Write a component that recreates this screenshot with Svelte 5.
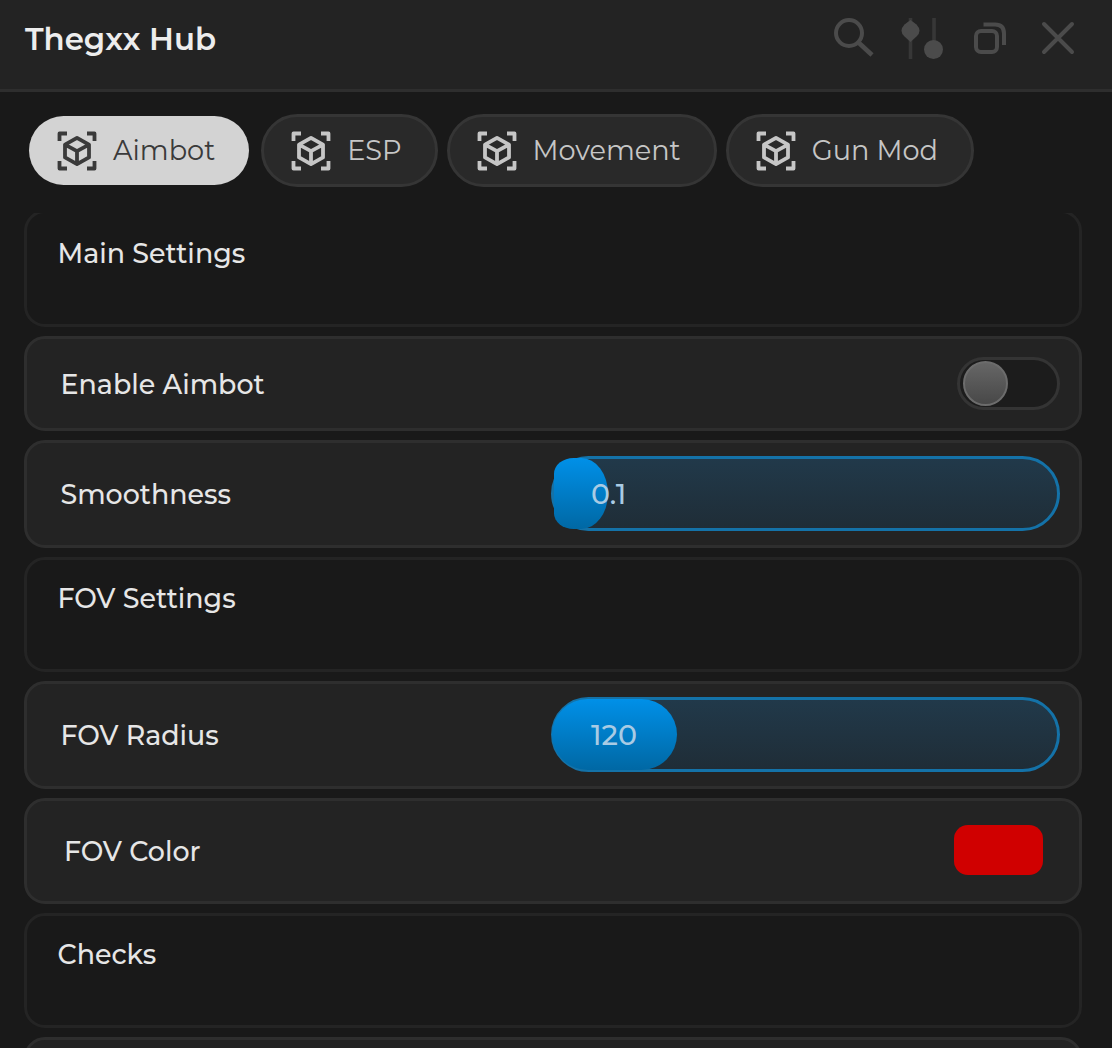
<script lang="ts">
  type Row = {
    kind: "section" | "toggle" | "slider" | "color";
    label: string;
    value?: string;
    fill?: number;
  };

  const tabs = ["Aimbot", "ESP", "Movement", "Gun Mod"];

  const rows: Row[] = [
    { kind: "section", label: "Main Settings" },
    { kind: "toggle", label: "Enable Aimbot" },
    { kind: "slider", label: "Smoothness", value: "0.1", fill: 10.7 },
    { kind: "section", label: "FOV Settings" },
    { kind: "slider", label: "FOV Radius", value: "120", fill: 24.4 },
    { kind: "color", label: "FOV Color" },
    { kind: "section", label: "Checks" },
  ];

  let activeTab = $state("Aimbot");
  let enabled = $state(false);
</script>

<div class="window">
  <header class="topbar">
    <h1>Thegxx Hub</h1>
    <div class="actions">
      <button aria-label="Search">
        <svg width="44" height="44" viewBox="0 0 44 44">
          <circle cx="17" cy="17" r="13" stroke-width="4" />
          <path d="M27 27L40 39" stroke-width="4.6" />
        </svg>
      </button>
      <button aria-label="Settings">
        <svg width="44" height="44" viewBox="0 0 44 44">
          <path d="M10.5 2V43M34 2V36" stroke-width="3.6" opacity="0.5" />
          <path class="solid" d="M10.5 4L16.5 8.5Q22.5 15 16.5 20.5L10.5 26L4.5 20.5Q-1.5 15 4.5 8.5Z" />
          <circle class="solid" cx="33.5" cy="33.5" r="9.5" />
        </svg>
      </button>
      <button aria-label="Minimize">
        <svg width="44" height="44" viewBox="0 0 44 44">
          <rect x="8" y="15" width="21" height="21" rx="5" stroke-width="4" />
          <path d="M15.5 8.5H27Q36 8.5 36 17.5V29" stroke-width="4" />
        </svg>
      </button>
      <button aria-label="Close">
        <svg width="44" height="44" viewBox="0 0 44 44">
          <path d="M8 8L36 36M36 8L8 36" stroke-width="4" stroke-linecap="round" />
        </svg>
      </button>
    </div>
  </header>

  <nav class="tabs">
    {#each tabs as tab}
      <button class="tab" class:active={activeTab === tab} onclick={() => (activeTab = tab)}>
        <svg width="40" height="40" viewBox="0 0 40 40">
          <path d="M2.5 10V2.5H10M30 2.5H37.5V10M37.5 30V37.5H30M10 37.5H2.5V30" />
          <path d="M20 6.8L32 13.6V26.4L20 33.2L8 26.4V13.6ZM8 13.6L20 20.2L32 13.6M20 20.2V33.2" />
        </svg>
        <span>{tab}</span>
      </button>
    {/each}
  </nav>

  <main class="rows">
    {#each rows as row}
      <section class="row {row.kind}">
        <span class="label">{row.label}</span>
        {#if row.kind === "toggle"}
          <button
            class="switch"
            class:on={enabled}
            aria-label={row.label}
            onclick={() => (enabled = !enabled)}
          >
            <span class="knob"></span>
          </button>
        {:else if row.kind === "slider"}
          <div class="track">
            <div class="fill" class:short={(row.fill ?? 0) < 15} style="width: {row.fill}%"></div>
            <span class="value">{row.value}</span>
          </div>
        {:else if row.kind === "color"}
          <button class="swatch" aria-label={row.label}></button>
        {/if}
      </section>
    {/each}
    <section class="row toggle"></section>
  </main>
</div>

<style>
  :global(body) {
    background: #191919;
  }

  .window {
    height: 1048px;
    overflow: hidden;
    display: flex;
    flex-direction: column;
    background: #191919;
    color: #e6e6e6;
    font-family: Montserrat, Inter, sans-serif;
  }

  button {
    padding: 0;
    border: none;
    background: none;
    color: inherit;
    font: inherit;
    cursor: pointer;
  }

  .topbar {
    box-sizing: border-box;
    height: 92px;
    flex: none;
    display: flex;
    justify-content: space-between;
    padding: 0 32px 0 25px;
    background: #232323;
    border-bottom: 3px solid #2e2e2e;
  }

  .topbar h1 {
    margin: 0;
    font-size: 30.8px;
    font-weight: 600;
    line-height: 79px;
    color: #ededed;
  }

  .actions {
    display: flex;
    gap: 24px;
    padding-top: 16px;
  }

  .actions button {
    width: 44px;
    height: 44px;
  }

  .actions svg {
    display: block;
    fill: none;
    stroke: #4b4b4b;
  }

  .actions .solid {
    fill: #4b4b4b;
    stroke: none;
  }

  .tabs {
    flex: none;
    display: flex;
    align-items: center;
    gap: 9px;
    height: 73px;
    padding: 22px 29px 0;
  }

  .tab {
    box-sizing: border-box;
    height: 73px;
    display: flex;
    align-items: center;
    gap: 16px;
    padding: 0 33px 0 27px;
    border: 3px solid #353535;
    border-radius: 37px;
    background: #292929;
    color: #c6c6c6;
    font-size: 27.2px;
  }

  .tab.active {
    height: 69px;
    margin-right: 3px;
    padding: 0 34px 0 28px;
    border: none;
    background: #d3d3d3;
    color: #3a3a3a;
  }

  .tab svg {
    flex: none;
    fill: none;
    stroke: currentColor;
    stroke-width: 3.8;
    stroke-linejoin: round;
  }

  .rows {
    flex: 1;
    min-height: 0;
    overflow: hidden;
    display: flex;
    flex-direction: column;
    gap: 9px;
    margin-top: 26px;
    padding: 0 30px 0 24px;
  }

  .row {
    box-sizing: border-box;
    flex: none;
    display: flex;
    align-items: center;
    justify-content: space-between;
    height: 108px;
    padding: 0 19px 0 33.5px;
    border: 3px solid #2e2e2e;
    border-radius: 21px;
    background: #232323;
  }

  .label {
    font-size: 26.9px;
    font-weight: 500;
  }

  .row.section {
    align-items: flex-start;
    height: 115px;
    padding: 22px 30px 0 30.5px;
    border-color: #242424;
    background: #191919;
  }

  /* scrolled just under the tab bar */
  .row.section:first-child {
    height: 117px;
    margin-top: -3px;
    padding-top: 24px;
  }

  .row.toggle {
    height: 95px;
  }

  .row.toggle .label {
    padding-top: 2px;
  }

  .row.color {
    height: 106px;
    padding: 0 36px 0 37px;
  }

  .switch {
    box-sizing: border-box;
    display: flex;
    align-items: center;
    width: 103px;
    height: 53px;
    padding: 0 3px;
    border: 3px solid #343434;
    border-radius: 27px;
    background: #1c1c1c;
  }

  .switch.on {
    justify-content: flex-end;
  }

  .knob {
    box-sizing: border-box;
    width: 45px;
    height: 45px;
    border: 2px solid #6c6c6c;
    border-radius: 50%;
    background: linear-gradient(#666, #484848);
  }

  .track {
    box-sizing: border-box;
    position: relative;
    display: flex;
    align-items: center;
    width: 509px;
    height: 75px;
    margin-bottom: 2px;
    border: 3px solid #1472a8;
    border-radius: 38px;
    background: linear-gradient(#21394a, #1f2d37);
  }

  .fill {
    height: 71px;
    margin-left: -2px;
    padding-right: 2px;
    border-radius: 36px;
    background: linear-gradient(#0090e8, #0068a4);
  }

  .fill.short {
    margin-left: 0;
    padding-right: 0;
    border-radius: 20px 27px 27px 20px / 16px 36px 36px 16px;
  }

  .value {
    position: absolute;
    left: 37px;
    padding-top: 1px;
    font-size: 28.5px;
    font-weight: 500;
    color: #a9cbe4;
  }

  .swatch {
    width: 89px;
    height: 50px;
    margin-bottom: 2px;
    border-radius: 14px;
    background: #d00000;
  }
</style>
